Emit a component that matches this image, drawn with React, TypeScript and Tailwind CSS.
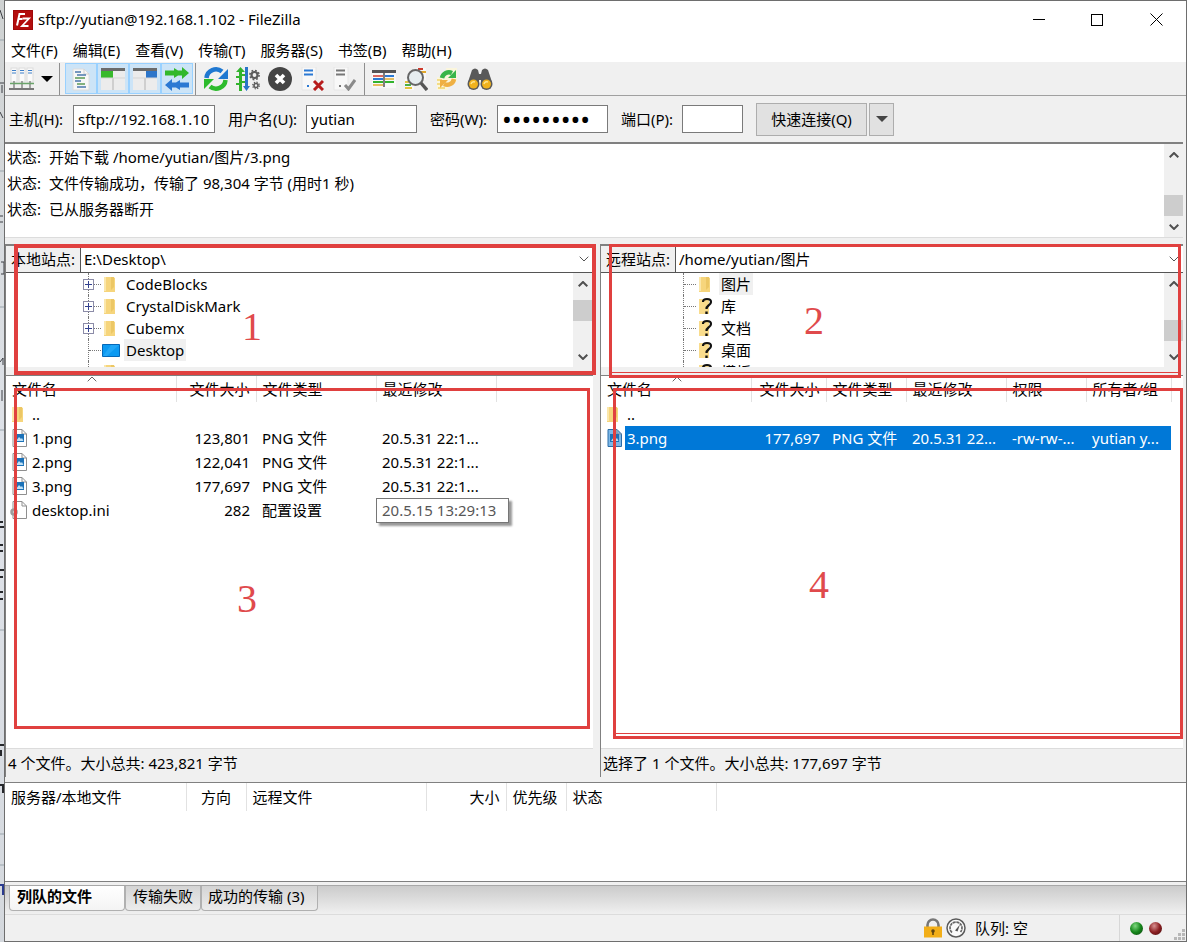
import { ReactNode } from 'react';
import clsx from 'clsx';

const localTree = [
  { name: 'CodeBlocks', expandable: true },
  { name: 'CrystalDiskMark', expandable: true },
  { name: 'Cubemx', expandable: true },
  { name: 'Desktop', selected: true, desktop: true },
  { name: 'Dism' },
];

const remoteTree = [
  { name: '图片', selected: true },
  { name: '库', unknown: true },
  { name: '文档', unknown: true },
  { name: '桌面', unknown: true },
  { name: '模板', unknown: true },
];

const localFiles = [
  { name: '..', kind: 'folder', cells: ['', '', ''] },
  { name: '1.png', kind: 'image', cells: ['123,801', 'PNG 文件', '20.5.31 22:1...'] },
  { name: '2.png', kind: 'image', cells: ['122,041', 'PNG 文件', '20.5.31 22:1...'] },
  { name: '3.png', kind: 'image', cells: ['177,697', 'PNG 文件', '20.5.31 22:1...'] },
  { name: 'desktop.ini', kind: 'config', cells: ['282', '配置设置', ''] },
];

const remoteFiles = [
  { name: '..', kind: 'folder', cells: ['', '', '', '', ''] },
  {
    name: '3.png',
    kind: 'image',
    selected: true,
    cells: ['177,697', 'PNG 文件', '20.5.31 22...', '-rw-rw-...', 'yutian y...'],
  },
];

const logLines = [
  '开始下载 /home/yutian/图片/3.png',
  '文件传输成功，传输了 98,304 字节 (用时1 秒)',
  '已从服务器断开',
];

/* ---------- icons ---------- */

function Icon({ children, size = 'size-6' }: { children: ReactNode; size?: string }) {
  return (
    <svg viewBox="0 0 24 24" className={clsx(size, 'shrink-0')} fill="none" aria-hidden="true">
      {children}
    </svg>
  );
}

function LogoIcon() {
  return (
    <svg viewBox="0 0 20 20" className="size-5 shrink-0" fill="none" aria-hidden="true">
      <rect width="20" height="20" fill="#b30d0d" />
      <rect x=".5" y=".5" width="19" height="19" stroke="#8c0505" strokeDasharray="1 1" />
      <path d="M4 15.5 6.5 4H12M5.5 9h4" stroke="#fff" strokeWidth="2" />
      <path d="M9.5 8.5H16L9 16h6.5" stroke="#fff" strokeWidth="1.8" />
    </svg>
  );
}

function ServersIcon() {
  return (
    <svg viewBox="0 0 26 24" className="h-6 w-[26px]" fill="none" aria-hidden="true">
      {[2, 10, 18].map((x) => (
        <g key={x}>
          <rect x={x} y="1" width="6" height="14" fill="#fafafa" stroke="#dcdcdc" />
          <path d={`M${x + 1} 3.500h4M${x + 1} 6h4`} stroke="#3d7fc8" />
          <path d={`M${x + 3} 14v8`} stroke="#888" strokeWidth="1.5" />
        </g>
      ))}
      <path d="M1 16.5h24" stroke="#6aa36a" strokeWidth="1.5" />
      <path d="M0 22h25" stroke="#777" strokeWidth="2" />
    </svg>
  );
}

function LogViewIcon() {
  return (
    <Icon>
      <path d="M4 2h11l5 5v16H4z" fill="#f7f7f7" stroke="#dcdcdc" />
      <path d="M15 2v5h5" stroke="#cfcfcf" />
      <path d="M6 5h6M8 8h9M6 14h6M8 20h9" stroke="#4b78ad" strokeWidth="1.4" />
      <path d="M6 11h10M8 17h8" stroke="#5c9a55" strokeWidth="1.4" />
    </Icon>
  );
}

function PaneIcon({ remote }: { remote?: boolean }) {
  return (
    <svg viewBox="0 0 26 24" className="h-6 w-[26px]" fill="none" aria-hidden="true">
      <path d="M1 1h24v22H1z" fill="#ececec" />
      <path d="M1 1h24v3H1z" fill="#6b6b6b" />
      <path d={remote ? 'M14 4h11v7H14z' : 'M1 4h12v7H1z'} fill={remote ? '#2c75c9' : '#38b92c'} />
      <path d="M13 11v12" stroke="#c6c6c6" strokeWidth="1.5" />
      <path d="M1 11h24" stroke="#d5d5d5" />
    </svg>
  );
}

function QueueViewIcon() {
  return (
    <svg viewBox="0 0 26 24" className="h-6 w-[26px]" aria-hidden="true">
      <path d="M1 3.500h9V1l4 2.500h4V0l7 6-7 6V8.500h-4L10 11V8.500H1z" fill="#32b82b" />
      <path d="M25 15.500h-9V13l-4 2.500H8V12l-7 6 7 6v-3.500h4l4 2.500v-2.500h9z" fill="#2b79d3" />
    </svg>
  );
}

function RefreshIcon() {
  return (
    <svg viewBox="0 0 26 26" className="size-[26px]" fill="none" aria-hidden="true">
      <path d="M3.500 12A9.500 9.500 0 0 1 19 5.500" stroke="#1f78d1" strokeWidth="4.500" />
      <path d="M25 3v10H15z" fill="#1f78d1" />
      <path d="M22.500 14A9.500 9.500 0 0 1 7 20.500" stroke="#2dbb2d" strokeWidth="4.500" />
      <path d="M1 23V13h10z" fill="#2dbb2d" />
    </svg>
  );
}

function ProcessQueueIcon() {
  return (
    <Icon>
      <path d="M3 24V5H0l4.500-5L9 5H6v19z" fill="#32b32d" />
      <path d="M0 10h4M0 17h4M6 8h3M6 15h3" stroke="#32b32d" strokeWidth="2" />
      <path d="M9 0h3v19h2l-3.500 5L7 19h2z" fill="#2975c8" />
      <circle cx="18.500" cy="8" r="3" stroke="#5c5c5c" strokeWidth="2.200" />
      <circle cx="18.500" cy="8" r="4.600" stroke="#5c5c5c" strokeWidth="1.600" strokeDasharray="1.800 1.800" />
      <circle cx="20" cy="18.500" r="2" stroke="#5c5c5c" strokeWidth="1.600" />
      <circle cx="20" cy="18.500" r="3.300" stroke="#5c5c5c" strokeWidth="1.300" strokeDasharray="1.300 1.300" />
    </Icon>
  );
}

function CancelIcon() {
  return (
    <Icon>
      <circle cx="12" cy="12" r="12" fill="#454545" />
      <path d="m8 8 8 8m0-8-8 8" stroke="#fff" strokeWidth="3.600" />
    </Icon>
  );
}

function ServerActionIcon({ reconnect }: { reconnect?: boolean }) {
  return (
    <Icon>
      <path d="M2 0h14v23H2z" fill="#f8f8f8" stroke="#e6e6e6" />
      <path d="M4 3.500h9M4 7.500h9" stroke={reconnect ? '#777' : '#2b79d3'} strokeWidth="1.800" />
      <path d="M7 19h2" stroke={reconnect ? '#777' : '#2b79d3'} strokeWidth="2" />
      {reconnect ? (
        <path d="m13 18 3.500 4L23 13" stroke="#8a8a8a" strokeWidth="3" />
      ) : (
        <path d="m14 14 9 9m0-9-9 9" stroke="#b71c1c" strokeWidth="3" />
      )}
    </Icon>
  );
}

function FilterIcon() {
  return (
    <svg viewBox="0 0 26 24" className="h-6 w-[26px]" fill="none" aria-hidden="true">
      <path d="M1 3h24v18H1z" fill="#f8f8f8" />
      <path d="M1 3h24v3H1z" fill="#555" />
      <path d="M2 9h10" stroke="#cf3a2c" strokeWidth="1.500" />
      <path d="M2 12h10M14 9h9" stroke="#2b79d3" strokeWidth="1.800" />
      <path d="M2 15h10M14 15h9" stroke="#32b32d" strokeWidth="1.800" />
      <path d="M2 18h10M14 12h9" stroke="#e0a92e" strokeWidth="1.500" />
      <path d="M13 5v15" stroke="#555" strokeWidth="1.500" />
    </svg>
  );
}

function SearchFilesIcon() {
  return (
    <Icon>
      <path d="M13 1h9v12h-9zM1 12h9v11H1z" fill="#f8f8f8" />
      <path d="M14 2h5" stroke="#cf3a2c" strokeWidth="2" />
      <path d="M16 5h6" stroke="#e2a82c" strokeWidth="2" />
      <path d="M1 15h5M1 21h7" stroke="#e3c23c" strokeWidth="2" />
      <path d="M1 18h6" stroke="#4cae45" strokeWidth="2" />
      <circle cx="11.500" cy="10.500" r="7.500" fill="#e6edf0" stroke="#666" strokeWidth="2" />
      <path d="m17 16 6 7" stroke="#555" strokeWidth="3.400" />
    </Icon>
  );
}

function CompareIcon() {
  return (
    <Icon>
      <path d="M10 1h11v14H10zM1 10h11v13H1z" fill="#fbf6dc" />
      <path d="M1 13h5M1 17h5M2 21h7" stroke="#f3dc85" strokeWidth="2" />
      <path d="M6 11a7 7 0 0 1 10-5" stroke="#39b54a" strokeWidth="4.500" />
      <path d="M20 3v8h-8z" fill="#39b54a" />
      <path d="M18 12a7 7 0 0 1-10 5" stroke="#efb043" strokeWidth="4.500" />
      <path d="M4 21v-8h8z" fill="#efb043" />
    </Icon>
  );
}

function BinocularsIcon() {
  return (
    <svg viewBox="0 0 26 24" className="h-6 w-[26px]" aria-hidden="true">
      <path d="M5 3q3-3 6 0l1 4h2l1-4q3-3 6 0l4 12v3H14v-5h-2v5H1v-3z" fill="#595959" />
      <circle cx="6.500" cy="17" r="6" fill="#595959" />
      <circle cx="19.500" cy="17" r="6" fill="#595959" />
      <circle cx="6.500" cy="17" r="4.500" fill="#f0b21d" />
      <circle cx="19.500" cy="17" r="4.500" fill="#f0b21d" />
      <path d="M4 17q1-3 4-2M17 17q1-3 4-2" stroke="#ffe48a" strokeWidth="1.500" fill="none" />
    </svg>
  );
}

function FolderIcon() {
  return (
    <svg viewBox="0 0 12 16" className="h-4 w-3 shrink-0" aria-hidden="true">
      <path d="M0 1h9l2 1v14H0z" fill="#f6d57c" />
      <path d="M0 1h2v14H0z" fill="#fbe7ab" />
      <path d="M7 1h3v10l-3 3z" fill="#ecc765" />
    </svg>
  );
}

function UnknownFolderIcon() {
  return (
    <svg viewBox="0 0 14 18" className="h-[18px] w-3.5 shrink-0" fill="none" aria-hidden="true">
      <path d="M0 2h10v15H0z" fill="#f9dc8c" />
      <path d="M4 5q0-3 4-3 4 0 4 3 0 2-2.500 3.500Q7.500 10 7.500 12" stroke="#111" strokeWidth="2.200" />
      <path d="M6.300 14.500h2.400V17H6.300z" fill="#111" />
    </svg>
  );
}

function DesktopIcon() {
  return (
    <svg viewBox="0 0 18 13" className="h-[13px] w-[18px] shrink-0" aria-hidden="true">
      <path d="M.5.500h17v12H.5z" fill="#0c9af2" stroke="#0668b8" />
      <path d="M9 1h8L5 12H1z" fill="#35b4fb" opacity=".5" />
    </svg>
  );
}

function FileIcon({ kind, selected }: { kind: string; selected?: boolean }) {
  if (kind === 'folder') {
    return <FolderIcon />;
  }
  return (
    <svg viewBox="0 0 15 18" className="h-[18px] w-[15px] overflow-visible" fill="none" aria-hidden="true">
      <path d="M1 .5h9l4.500 4.500v12.500H1z" fill={selected ? '#7db8e8' : '#fff'} stroke={selected ? '#2b6ca8' : '#8f8f8f'} />
      <path d="M10 .5V5h4.500" stroke="#8f8f8f" />
      {kind === 'image' ? (
        <>
          <path d="M3 5h9v8H3z" fill="#1c72b8" />
          <path d="m4 12 3-4 2 2 1-1 1.500 3z" fill="#bfe0f5" />
        </>
      ) : (
        <circle cx="2" cy="11" r="2.500" stroke="#9c9c9c" strokeWidth="2.500" />
      )}
    </svg>
  );
}

function Chevron({ up, className }: { up?: boolean; className?: string }) {
  return (
    <svg viewBox="0 0 10 6" className={className} fill="none" stroke="currentColor" aria-hidden="true">
      <path d={up ? 'm.7 5.300 4.300-4.300 4.300 4.300' : 'M.7.700 5 5 9.300.7'} />
    </svg>
  );
}

function Caret({ className }: { className?: string }) {
  return (
    <svg viewBox="0 0 12 6" className={clsx('h-1.5 w-3', className)} fill="currentColor" aria-hidden="true">
      <path d="M0 0h12L6 6z" />
    </svg>
  );
}

/* ---------- building blocks ---------- */

// sliver of the windows lying behind the main one
function Backdrop() {
  return (
    <div className="relative w-1 shrink-0 bg-linear-to-b from-[#cfd2d2] via-[#dfe3ea] to-[#d4d8dd]">
      <svg viewBox="0 0 4 942" className="absolute top-0 left-0 h-[942px] w-1" fill="none" aria-hidden="true">
        <path d="M0 40h4M0 171h4M0 307h4M0 430h4M0 630h4M0 834h4M0 865h4" stroke="#9aa5ad" />
        <path d="M0 10l3 9M0 83h4M2 85v8M0 112l3 6M0 216h3M0 222h3M1 262h3v12H1M0 362l3-4v7M2 390v11" stroke="#3c3f44" />
        <path d="M0 522h3M0 527h4M0 545h3M0 551h3M0 570h4M0 577h3M0 592h3M0 599h3M0 745h4M1 750v6M0 785h3v8" stroke="#26282c" strokeWidth="2" />
        <path d="M0 885h3v10" stroke="#2b3b8f" strokeWidth="2" />
      </svg>
    </div>
  );
}

function ScrollBar({ offset }: { offset: string }) {
  return (
    <div className="flex w-[19px] shrink-0 flex-col bg-[#f0f0f0] text-[#505050]">
      <button type="button" aria-label="向上滚动" className="flex h-[21px] items-center justify-center">
        <Chevron up className="h-1.5 w-2.5 stroke-2" />
      </button>
      <div className={clsx('flex-1', offset)}>
        <div className="h-[21px] bg-[#cdcdcd]" />
      </div>
      <button type="button" aria-label="向下滚动" className="flex h-[21px] items-center justify-center">
        <Chevron className="h-1.5 w-2.5 stroke-2" />
      </button>
    </div>
  );
}

function Separator() {
  return <div className="h-8 w-px bg-[#8f8f8f]" />;
}

function ToolButton({ label, active, children }: { label: string; active?: boolean; children: ReactNode }) {
  return (
    <button
      type="button"
      aria-label={label}
      className={clsx(
        'flex h-[31px] w-8 items-center justify-center',
        active && 'border border-[#99d1ff] bg-[#cce4f7]',
      )}
    >
      {children}
    </button>
  );
}

interface TreeNode {
  name: string;
  expandable?: boolean;
  selected?: boolean;
  desktop?: boolean;
  unknown?: boolean;
}

function Tree({ nodes, indent }: { nodes: TreeNode[]; indent: string }) {
  return (
    <ul className={clsx('h-[94px] min-w-0 flex-1 overflow-hidden', indent)}>
      {nodes.map((node) => (
        <li key={node.name} className="flex h-[22px] items-center border-l border-dotted border-[#777]">
          {node.expandable && (
            <span className="-ml-1.5 flex size-[11px] shrink-0 items-center justify-center border border-[#8c8ca8] bg-white">
              <svg viewBox="0 0 7 7" className="size-[7px]" stroke="#33418f" aria-hidden="true">
                <path d="M3.500 0v7M0 3.500h7" />
              </svg>
            </span>
          )}
          <span className={clsx('border-t border-dotted border-[#777]', node.expandable ? 'w-[7px]' : 'w-3')} />
          <span className={clsx('flex w-[23px] shrink-0', node.desktop ? 'pl-px' : 'pl-[3px]')}>
            {node.desktop ? <DesktopIcon /> : node.unknown ? <UnknownFolderIcon /> : <FolderIcon />}
          </span>
          <span className={clsx('px-0.5 leading-[22px]', node.selected && 'bg-[#f0f0f0]')}>{node.name}</span>
        </li>
      ))}
    </ul>
  );
}

interface FileRow {
  name: string;
  kind: string;
  selected?: boolean;
  cells: string[];
}

interface FileTableProps {
  label: string;
  headers: string[];
  widths: string[];
  rows: FileRow[];
}

function FileTable({ label, headers, widths, rows }: FileTableProps) {
  return (
    <table aria-label={label} className="w-full table-fixed border-collapse">
      <colgroup>
        {widths.map((width, i) => (
          <col key={i} className={width} />
        ))}
        <col />
      </colgroup>
      <thead>
        <tr className="h-[26px]">
          {headers.map((header, i) => (
            <th
              key={header}
              className={clsx(
                'relative border-r border-[#e2e2e2] px-1.5 font-normal whitespace-nowrap',
                i === 1 ? 'text-right' : 'text-left',
              )}
            >
              {header}
              {i === 0 && <Chevron up className="absolute top-0 left-1/2 -ml-1 h-1.5 w-2.5 text-[#666]" />}
            </th>
          ))}
          <td />
        </tr>
      </thead>
      <tbody>
        {rows.map((row) => (
          <tr key={row.name} className="h-6 whitespace-nowrap">
            <td className="p-0">
              <div className="flex h-6 items-center pl-1.5">
                <span className="flex w-[18px] shrink-0">
                  <FileIcon kind={row.kind} selected={row.selected} />
                </span>
                <span className={clsx('flex-1 pl-0.5', row.selected && 'bg-[#0078d7] text-white')}>{row.name}</span>
              </div>
            </td>
            {row.cells.map((cell, i) => (
              <td
                key={i}
                className={clsx(
                  'overflow-hidden px-1.5 py-0',
                  i === 0 && 'text-right',
                  row.selected && 'bg-[#0078d7] text-white',
                )}
              >
                {cell}
              </td>
            ))}
            <td />
          </tr>
        ))}
      </tbody>
    </table>
  );
}

function PathBar({ id, label, path }: { id: string; label: string; path: string }) {
  return (
    <div className="relative flex h-[27px] border-b border-[#555] bg-white">
      <label htmlFor={id} className="flex w-[75px] items-center border-r border-[#555] bg-[#f0f0f0] pl-[5px] whitespace-nowrap">
        {label}
      </label>
      <select id={id} className="min-w-0 flex-1 appearance-none bg-white pl-[3px] outline-none">
        <option>{path}</option>
      </select>
      <Chevron className="pointer-events-none absolute top-2.5 right-1 h-1.5 w-2.5 text-[#555]" />
    </div>
  );
}

interface MarkProps {
  box: string;
  text: string;
  underline?: boolean;
  children: string;
}

function Mark({ box, text, underline, children }: MarkProps) {
  return (
    <div className={clsx('pointer-events-none absolute z-10 border-[#e0403f]', box)}>
      <span className={clsx('absolute font-["Liberation_Serif",serif] text-[40px] leading-10 text-[#e04a4c]', text)}>
        {children}
      </span>
      {underline && <span className="absolute inset-x-0 bottom-0.5 h-px bg-[#e0403f]" />}
    </div>
  );
}

interface FieldProps {
  id: string;
  label: string;
  labelWidth: string;
  inputClass: string;
  type?: string;
  value?: string;
}

function Field({ id, label, labelWidth, inputClass, type = 'text', value = '' }: FieldProps) {
  return (
    <div className="flex items-center">
      <label htmlFor={id} className={clsx('whitespace-nowrap', labelWidth)}>
        {label}
      </label>
      <input
        id={id}
        type={type}
        defaultValue={value}
        className={clsx('h-7 border border-[#7a7a7a] bg-white px-1 outline-none', inputClass)}
      />
    </div>
  );
}

/* ---------- page ---------- */

export default function App() {
  return (
    <div className='flex min-h-screen bg-[#f0f0f0] font-["Noto_Sans","Noto_Sans_CJK_SC",sans-serif] text-[15px] leading-6 text-black'>
      <Backdrop />
      <main className="flex min-w-0 flex-1 flex-col border border-[#6e6e6e]">
        <header className="bg-white">
          <div className="flex h-[37px] items-center pl-2">
            <LogoIcon />
            <h1 className="ml-[5px] flex-1 pb-0.5">sftp://yutian@192.168.1.102 - FileZilla</h1>
            <button type="button" aria-label="最小化" className="flex h-full w-[58px] items-center justify-center">
              <span className="h-px w-3 bg-black" />
            </button>
            <button type="button" aria-label="最大化" className="flex h-full w-[58px] items-center justify-center">
              <span className="size-3 border border-black" />
            </button>
            <button type="button" aria-label="关闭" className="flex h-full w-[60px] items-center justify-center">
              <svg viewBox="0 0 13 13" className="size-[13px]" stroke="#000" aria-hidden="true">
                <path d="m.5.500 12 12m0-12-12 12" />
              </svg>
            </button>
          </div>
          <nav className="flex h-6 gap-[15px] pl-1.5 whitespace-nowrap">
            {['文件(F)', '编辑(E)', '查看(V)', '传输(T)', '服务器(S)', '书签(B)', '帮助(H)'].map((item) => (
              <button key={item} type="button">
                {item}
              </button>
            ))}
          </nav>
        </header>

        <div className="flex h-[34px] items-center border-b border-[#a0a0a0] pl-1">
          <button type="button" aria-label="站点管理器" className="flex w-[50px] items-center justify-between pr-1.5">
            <ServersIcon />
            <Caret className="w-2.5" />
          </button>
          <Separator />
          <div className="mr-0.5 ml-[5px] flex">
            <ToolButton label="消息日志" active><LogViewIcon /></ToolButton>
            <ToolButton label="本地目录树" active><PaneIcon /></ToolButton>
            <ToolButton label="远程目录树" active><PaneIcon remote /></ToolButton>
            <ToolButton label="传输队列" active><QueueViewIcon /></ToolButton>
          </div>
          <Separator />
          <div className="mx-1 flex">
            <ToolButton label="刷新"><RefreshIcon /></ToolButton>
            <ToolButton label="处理队列"><ProcessQueueIcon /></ToolButton>
            <ToolButton label="取消"><CancelIcon /></ToolButton>
            <ToolButton label="断开"><ServerActionIcon /></ToolButton>
            <ToolButton label="重新连接"><ServerActionIcon reconnect /></ToolButton>
          </div>
          <Separator />
          <div className="ml-[3px] flex">
            <ToolButton label="过滤"><FilterIcon /></ToolButton>
            <ToolButton label="搜索"><SearchFilesIcon /></ToolButton>
            <ToolButton label="比较"><CompareIcon /></ToolButton>
            <ToolButton label="查找"><BinocularsIcon /></ToolButton>
          </div>
        </div>

        <form className="flex h-[46px] items-center gap-[13px] pl-1">
          <Field id="host" label="主机(H):" labelWidth="w-16" inputClass="w-[142px]" value="sftp://192.168.1.102" />
          <Field id="user" label="用户名(U):" labelWidth="w-[78px]" inputClass="w-[111px]" value="yutian" />
          <Field id="pass" type="password" label="密码(W):" labelWidth="w-[67px]" inputClass="w-[111px] text-[26px]" value="123456789" />
          <Field id="port" label="端口(P):" labelWidth="w-[61px]" inputClass="w-[61px]" />
          <div className="flex gap-0.5">
            <button type="button" className="h-[33px] w-[111px] border border-[#adadad] bg-[#e1e1e1]">
              快速连接(Q)
            </button>
            <button type="button" aria-label="历史连接" className="flex h-[33px] w-[25px] items-center justify-center border border-[#adadad] bg-[#e1e1e1] text-[#444]">
              <Caret />
            </button>
          </div>
        </form>

        <section className="mr-[3px] flex border-t-2 border-b border-t-[#808080] border-b-[#dcdcdc] bg-white">
          <div className="min-w-0 flex-1 pb-[15px] pl-0.5">
            {logLines.map((line) => (
              <p key={line} className="flex h-[26px] items-center">
                <span className="w-[42px]">状态:</span>
                {line}
              </p>
            ))}
          </div>
          <ScrollBar offset="pt-[30px]" />
        </section>

        <div className="mt-1.5 mr-[3px] grid flex-1 grid-cols-[588fr_583fr] gap-x-[7px]">
          <div className="flex min-w-0 flex-col border-l border-[#808080]">
            <section className="relative border-t-2 border-[#808080] bg-white">
              <PathBar id="local-path" label="本地站点:" path="E:\Desktop\" />
              <div className="flex pr-px">
                <Tree nodes={localTree} indent="pl-[82px]" />
                <ScrollBar offset="pt-[6px]" />
              </div>
              <Mark box="-top-0.5 -right-[3px] -bottom-2 left-2 border-4" text="top-[59px] left-[224px]">1</Mark>
            </section>
            <section className="relative mt-2 flex flex-1 flex-col border-t border-[#808080] bg-white">
              <FileTable
                label="本地文件"
                headers={['文件名', '文件大小', '文件类型', '最近修改']}
                widths={['w-[170px]', 'w-20', 'w-[120px]', 'w-[120px]']}
                rows={localFiles}
              />
              <div role="tooltip" className="absolute top-[122px] left-[370px] w-[133px] border border-[#767676] bg-white px-[5px] leading-[23px] text-[#575757] shadow-[3px_3px_2px_#999]">
                20.5.15 13:29:13
              </div>
              <Mark box="top-3 right-[3px] bottom-12 left-2 border-[3px]" text="top-[188px] left-[220px]">3</Mark>
              <p className="mt-auto h-[29px] border-t border-[#dcdcdc] bg-[#f0f0f0] pl-0.5 leading-7">
                4 个文件。大小总共: 423,821 字节
              </p>
            </section>
          </div>

          <div className="flex min-w-0 flex-col border-l border-[#808080]">
            <section className="relative border-t-2 border-[#808080] bg-white">
              <PathBar id="remote-path" label="远程站点:" path="/home/yutian/图片" />
              <div className="flex">
                <Tree nodes={remoteTree} indent="pl-[82px]" />
                <ScrollBar offset="pt-[26px]" />
              </div>
              <Mark underline box="-top-0.5 right-0.5 -bottom-[11px] left-2 border-[3px]" text="top-[54px] left-[192px]">2</Mark>
            </section>
            <section className="relative mt-2 flex flex-1 flex-col border-t border-[#808080] bg-white">
              <FileTable
                label="远程文件"
                headers={['文件名', '文件大小', '文件类型', '最近修改', '权限', '所有者/组']}
                widths={['w-[150px]', 'w-[75px]', 'w-20', 'w-[100px]', 'w-20', 'w-[85px]']}
                rows={remoteFiles}
              />
              <Mark underline box="top-3 right-0 bottom-[38px] left-3 border-[3px]" text="top-[174px] left-[193px]">4</Mark>
              <p className="mt-auto h-[29px] border-t border-[#dcdcdc] bg-[#f0f0f0] pl-0.5 leading-7">
                选择了 1 个文件。大小总共: 177,697 字节
              </p>
            </section>
          </div>
        </div>

        <section className="mt-[5px] h-[100px] border-y border-[#808080] bg-white">
          <table aria-label="传输队列" className="w-full table-fixed border-collapse">
            <thead>
              <tr className="h-7 text-left whitespace-nowrap *:border-r *:border-[#e2e2e2] *:px-1.5 *:py-0 *:font-normal">
                <th className="w-[181px]">服务器/本地文件</th>
                <th className="w-[60px] text-center">方向</th>
                <th className="w-[180px]">远程文件</th>
                <th className="w-20 text-right">大小</th>
                <th className="w-[60px]">优先级</th>
                <th className="w-[150px]">状态</th>
                <td className="border-r-0!" />
              </tr>
            </thead>
          </table>
        </section>

        <div className="mt-[3px] flex h-[29px] items-start border-t border-[#a8a8a8] bg-linear-to-b from-[#cbcbcb] to-[#f0f0f0] pl-1">
          <button type="button" className="h-[25px] w-[116px] rounded-b-sm border border-t-0 border-[#b0b0b0] bg-linear-to-b from-white to-[#f4f4f4] pb-1 pl-[7px] text-left leading-5 font-bold">
            列队的文件
          </button>
          <button type="button" className="h-[25px] w-[76px] rounded-b-sm border border-t-0 border-[#b0b0b0] bg-linear-to-b from-[#d4d4d4] to-[#ececec] pb-1 leading-5">
            传输失败
          </button>
          <button type="button" className="h-[25px] w-[117px] rounded-b-sm border border-t-0 border-[#b0b0b0] bg-linear-to-b from-[#d4d4d4] to-[#ececec] pb-1 pl-1.5 text-left leading-5">
            成功的传输 (3)
          </button>
        </div>

        <footer className="flex h-[27px] items-center justify-end border-t border-[#dcdcdc]">
          <svg viewBox="0 0 20 20" className="size-5" fill="none" aria-hidden="true">
            <path d="M4.500 9V7a5.500 5.500 0 0 1 11 0v2" stroke="#777" strokeWidth="2.600" />
            <rect x="1" y="8.500" width="18" height="11" fill="#f2ae18" />
            <circle cx="10" cy="13" r="1.800" fill="#604510" />
            <path d="M9.200 13h1.600v4H9.200z" fill="#604510" />
          </svg>
          <svg viewBox="0 0 20 20" className="ml-[3px] size-5" fill="none" aria-hidden="true">
            <circle cx="10" cy="10" r="9" stroke="#5a5a5a" strokeWidth="1.500" fill="#fafafa" />
            <path d="M6 14.500A6 6 0 1 1 14.500 14" stroke="#666" strokeWidth="1.700" strokeDasharray="3 .6" />
            <path d="m9 12.500 5-6-2.500 7z" fill="#555" />
          </svg>
          <span className="ml-[9px] w-36">队列: 空</span>
          <span className="mr-2.5 h-full w-px bg-[#d7d7d7]" />
          <span className="size-[13px] rounded-full bg-radial-[at_40%_30%] from-[#7fd87f] via-[#15861b] to-[#0a3d0c]" />
          <span className="ml-1.5 size-[13px] rounded-full bg-radial-[at_40%_30%] from-[#d89090] via-[#8c1f22] to-[#3f0a0a]" />
          <svg viewBox="0 0 12 12" className="ml-3 size-3 self-end" fill="#b8b8b8" aria-hidden="true">
            <path d="M8 0h3v3H8zM4 4h3v3H4zM8 4h3v3H8zM0 8h3v3H0zM4 8h3v3H4zM8 8h3v3H8z" />
          </svg>
        </footer>
      </main>
    </div>
  );
}
